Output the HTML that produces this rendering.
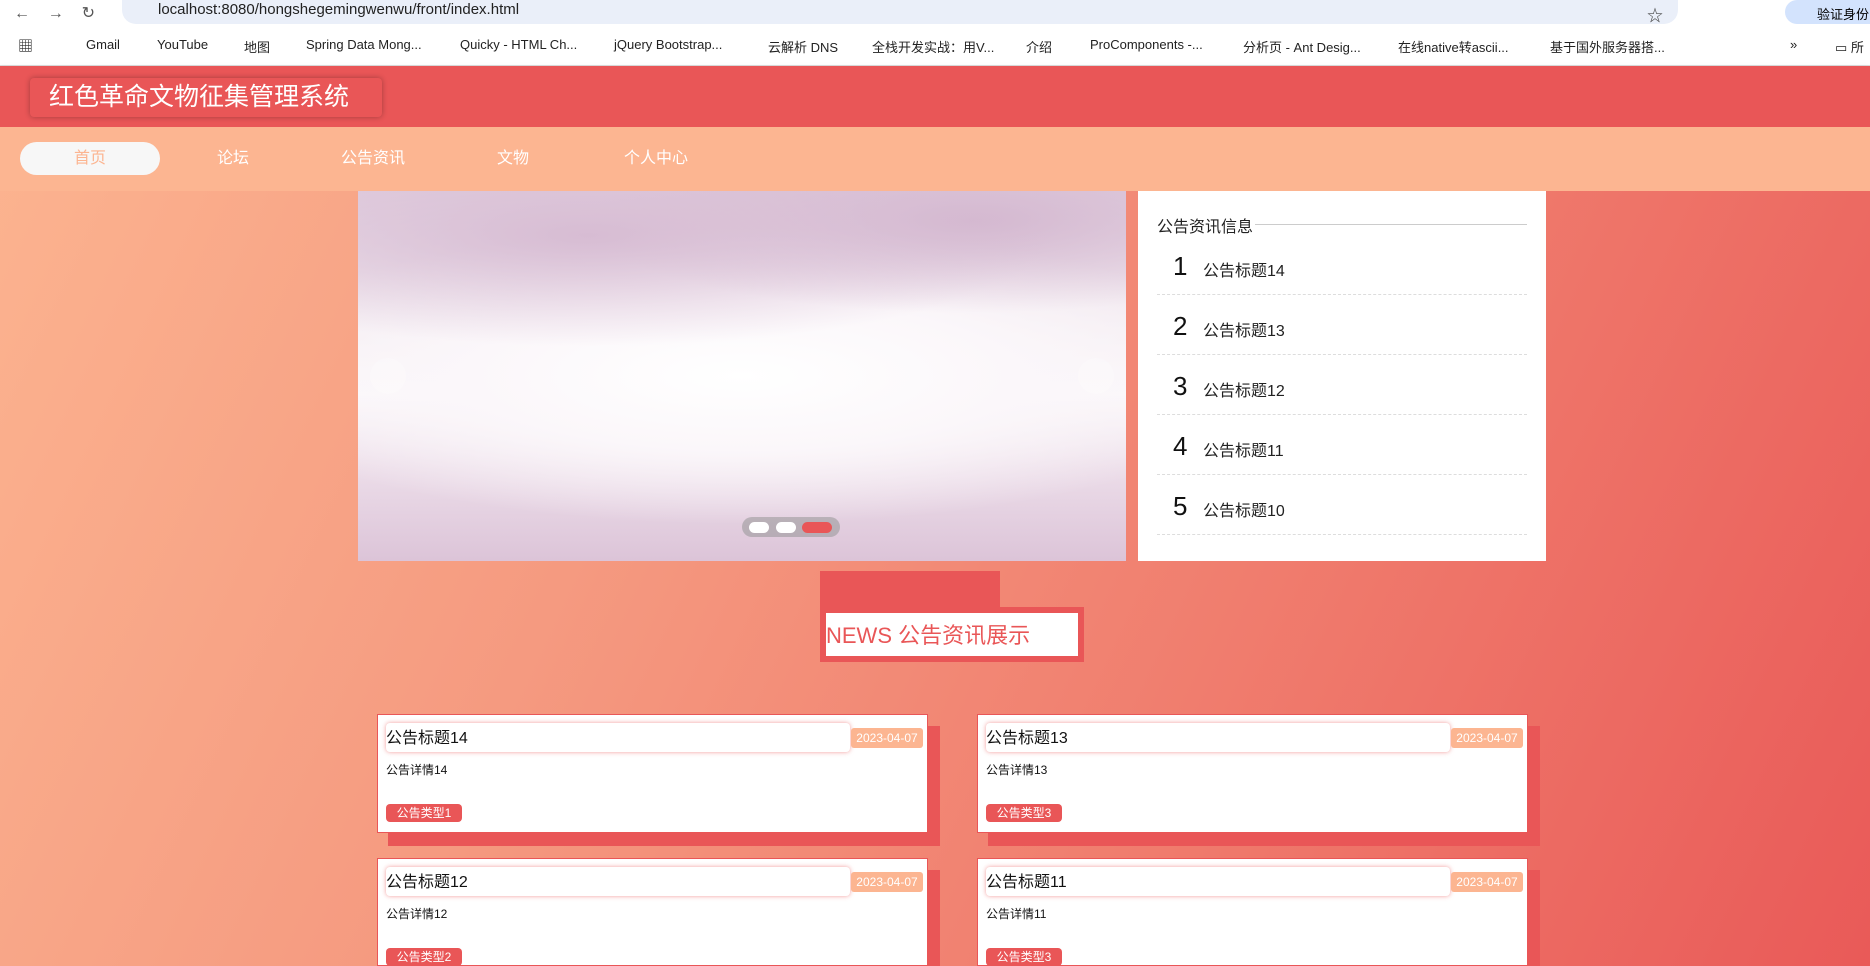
<!DOCTYPE html>
<html><head><meta charset="utf-8"><style>
*{margin:0;padding:0;box-sizing:border-box}
html{width:1870px;height:966px;overflow:hidden}
body{width:1870px;height:966px;overflow:hidden;font-family:"Liberation Sans","Noto Sans CJK SC",sans-serif;background:#fff;position:relative}
.abs{position:absolute}
#chrome{left:0;top:0;width:1870px;height:26px;background:#fff}
#addr{left:122px;top:0;width:1556px;height:24px;background:#eaeff9;border-radius:0 0 14px 14px;font-size:15px;color:#222;padding:1px 0 0 36px}
#bm{left:0;top:26px;width:1870px;height:40px;background:#fff;border-bottom:1px solid #ddd;font-size:13px;color:#222}
#bm span{position:absolute;top:11px}
#bg{left:0;top:66px;width:1870px;height:900px;background:linear-gradient(115deg,#fcb490 0%,#f59a80 35%,#f07d6e 65%,#e95a58 100%)}
#hdr{left:0;top:66px;width:1870px;height:61px;background:#e95657;box-shadow:0 3px 6px rgba(0,0,0,.2)}
#title{left:30px;top:78px;width:352px;height:39px;border-radius:4px;background:#e95657;box-shadow:0 0 6px rgba(0,0,0,.3);color:#fff;font-size:25px;line-height:38px;padding-left:19px}
#nav{left:0;top:127px;width:1870px;height:64px;background:#fcb591}
.ni{position:absolute;top:142px;height:33px;line-height:33px;font-size:16px;color:#fff;text-align:center;width:140px}
#car{left:358px;top:191px;width:768px;height:370px;overflow:hidden;background:
radial-gradient(ellipse 60% 30% at 30% 12%,#d7bcd3 0%,rgba(215,188,211,0) 100%),
radial-gradient(ellipse 50% 25% at 80% 8%,#d4b8d0 0%,rgba(212,184,208,0) 100%),
radial-gradient(ellipse 70% 40% at 50% 50%,#fff 0%,#fbf7fa 50%,rgba(250,245,249,0) 100%),
linear-gradient(180deg,#e2d0e0 0%,#f1e8ef 30%,#fbf8fa 55%,#ecdde9 75%,#dcc4d8 100%)}
#panel{left:1138px;top:191px;width:408px;height:370px;background:#fff}
.row{position:absolute;left:19px;width:370px;height:60px;border-bottom:1px dashed #ddd}
.row b{position:absolute;left:16px;top:16px;font-weight:normal;font-size:26px;color:#111}
.row i{position:absolute;left:46px;top:22px;font-style:normal;font-size:16px;color:#222}
.card{position:absolute;width:551px;height:119px;background:#fff;border:1px solid #e95657}
.sh{position:absolute;width:552px;height:120px;background:#e95657}
.ti{position:absolute;left:8px;top:8px;width:464px;height:29px;border-radius:4px;box-shadow:0 0 5px rgba(233,86,87,.6);font-size:16px;line-height:31px;color:#111;background:#fff}
.dt{position:absolute;left:473px;top:13px;width:72px;height:20px;background:#fcb591;border-radius:3px;color:#fff;font-size:12px;line-height:20px;text-align:center}
.de{position:absolute;left:8px;top:46px;font-size:12px;color:#111}
.tg{position:absolute;left:8px;top:89px;width:76px;height:18px;background:#e95657;border-radius:4px;color:#fff;font-size:12px;line-height:18px;text-align:center}
</style></head><body>
<div id="chrome" class="abs"></div>
<div class="abs" style="left:14px;top:3px;font-size:16px;color:#555">←&nbsp;&nbsp;&nbsp;&nbsp;→&nbsp;&nbsp;&nbsp;&nbsp;↻</div>
<div id="addr" class="abs">localhost:8080/hongshegemingwenwu/front/index.html</div>
<div class="abs" style="left:1647px;top:2px;font-size:16px;color:#444">☆</div>
<div class="abs" style="left:1785px;top:0;width:85px;height:24px;background:#d3e3fd;border-radius:12px 0 0 12px;font-size:13px;padding:4px 0 0 32px">验证身份</div>
<div id="bm" class="abs">
<span style="left:18px;top:9px;font-size:15px">▦</span>
<span style="left:86px">Gmail</span><span style="left:157px">YouTube</span><span style="left:244px">地图</span>
<span style="left:306px">Spring Data Mong...</span><span style="left:460px">Quicky - HTML Ch...</span>
<span style="left:614px">jQuery Bootstrap...</span><span style="left:768px">云解析 DNS</span>
<span style="left:872px">全栈开发实战：用V...</span><span style="left:1026px">介绍</span>
<span style="left:1090px">ProComponents -...</span><span style="left:1243px">分析页 - Ant Desig...</span>
<span style="left:1398px">在线native转ascii...</span><span style="left:1550px">基于国外服务器搭...</span>
<span style="left:1790px">»</span><span style="left:1835px">▭ 所</span>
</div>
<div id="bg" class="abs"></div>
<div id="hdr" class="abs"></div>
<div id="title" class="abs">红色革命文物征集管理系统</div>
<div id="nav" class="abs"></div>
<div class="abs" style="left:20px;top:142px;width:140px;height:33px;border-radius:17px;background:#f7f7f7"></div>
<div class="ni" style="left:20px;color:#fcb591">首页</div>
<div class="ni" style="left:163px">论坛</div>
<div class="ni" style="left:303px">公告资讯</div>
<div class="ni" style="left:443px">文物</div>
<div class="ni" style="left:586px">个人中心</div>
<div id="car" class="abs">
<div class="abs" style="left:12px;top:167px;width:36px;height:36px;border-radius:50%;background:rgba(255,255,255,.25)"></div>
<div class="abs" style="left:720px;top:167px;width:36px;height:36px;border-radius:50%;background:rgba(255,255,255,.25)"></div>
<div class="abs" style="left:384px;top:326px;width:98px;height:20px;border-radius:10px;background:rgba(150,150,150,.55)"></div>
<div class="abs" style="left:391px;top:331px;width:20px;height:11px;border-radius:6px;background:#fff"></div>
<div class="abs" style="left:418px;top:331px;width:20px;height:11px;border-radius:6px;background:#fff"></div>
<div class="abs" style="left:444px;top:331px;width:30px;height:11px;border-radius:6px;background:#e95657"></div>
</div>
<div id="panel" class="abs">
<div class="abs" style="left:19px;top:33px;width:370px;border-top:1px solid #ccc"></div>
<div class="abs" style="left:19px;top:22px;font-size:16px;color:#222;background:#fff;padding-right:2px">公告资讯信息</div>
<div class="row" style="top:44px"><b>1</b><i>公告标题14</i></div>
<div class="row" style="top:104px"><b>2</b><i>公告标题13</i></div>
<div class="row" style="top:164px"><b>3</b><i>公告标题12</i></div>
<div class="row" style="top:224px"><b>4</b><i>公告标题11</i></div>
<div class="row" style="top:284px"><b>5</b><i>公告标题10</i></div>
</div>
<div class="abs" style="left:820px;top:571px;width:180px;height:37px;background:#e95657"></div>
<div class="abs" style="left:820px;top:607px;width:264px;height:55px;background:#e95657"></div>
<div class="abs" style="left:826px;top:613px;width:252px;height:43px;background:#fff;color:#e95657;font-size:22px;line-height:46px">NEWS 公告资讯展示</div>

<div class="sh" style="left:388px;top:726px"></div>
<div class="card" style="left:377px;top:714px"><div class="ti">公告标题14</div><div class="dt">2023-04-07</div><div class="de">公告详情14</div><div class="tg">公告类型1</div></div>
<div class="sh" style="left:988px;top:726px"></div>
<div class="card" style="left:977px;top:714px"><div class="ti">公告标题13</div><div class="dt">2023-04-07</div><div class="de">公告详情13</div><div class="tg">公告类型3</div></div>
<div class="sh" style="left:388px;top:870px;height:96px"></div>
<div class="card" style="left:377px;top:858px;height:108px"><div class="ti">公告标题12</div><div class="dt">2023-04-07</div><div class="de">公告详情12</div><div class="tg">公告类型2</div></div>
<div class="sh" style="left:988px;top:870px;height:96px"></div>
<div class="card" style="left:977px;top:858px;height:108px"><div class="ti">公告标题11</div><div class="dt">2023-04-07</div><div class="de">公告详情11</div><div class="tg">公告类型3</div></div>
</body></html>
